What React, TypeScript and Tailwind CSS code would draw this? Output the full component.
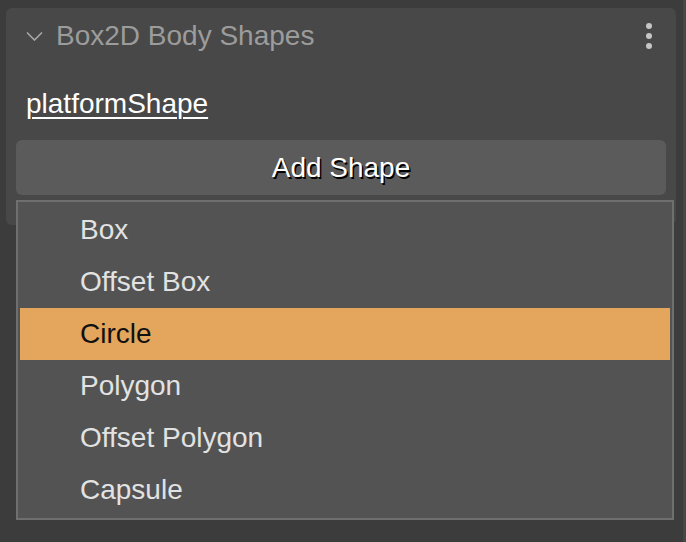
import React from 'react';

const items = ['Box', 'Offset Box', 'Circle', 'Polygon', 'Offset Polygon', 'Capsule'];

export default function App() {
  const active = 'Circle';

  return (
    <div
      className="relative flex w-[686px] h-[542px] bg-[#3c3c3c] overflow-hidden"
      style={{ fontFamily: '"Liberation Sans", Arial, sans-serif' }}
    >
      <div className="flex-1 pl-[6px] pt-[8px]">
        {/* Inspector panel */}
        <div className="w-[670px] rounded-[6px] bg-[#484848] px-[10px] pb-[30px]">
          {/* Header */}
          <div className="flex h-[54px] items-center justify-between pt-[1px]">
            <div className="flex items-center">
              <svg
                className="ml-[10px] w-[17px] h-[10px]"
                viewBox="0 0 17 10"
                fill="none"
                stroke="#a8a8a8"
                strokeWidth="1.6"
              >
                <path d="M1 1.5 L8.5 9 L16 1.5" />
              </svg>
              <span className="ml-[13px] text-[28px] leading-[32px] text-[#9c9c9c]">Box2D Body Shapes</span>
            </div>
            <div className="flex flex-col gap-[4px] pr-[14px]">
              <span className="w-[6px] h-[6px] rounded-full bg-[#c6c6c6]" />
              <span className="w-[6px] h-[6px] rounded-full bg-[#c6c6c6]" />
              <span className="w-[6px] h-[6px] rounded-full bg-[#c6c6c6]" />
            </div>
          </div>

          {/* Shape name */}
          <div className="mt-[26px] pl-[10px] text-[28px] leading-[32px] text-white underline decoration-2 underline-offset-[4px]">
            platformShape
          </div>

          {/* Add button */}
          <button className="mt-[20px] flex h-[55px] w-full items-center justify-center rounded-[6px] bg-[#5b5b5b] text-[28px] leading-[32px] text-white [text-shadow:1.5px_1.5px_0.5px_#000]">
            Add Shape
          </button>
        </div>
      </div>

      {/* Right edge strip */}
      <div className="w-[3px] bg-[#474747]" />

      {/* Dropdown menu */}
      <div className="absolute left-[16px] top-[200px] w-[658px] border-2 border-[#6f6f6f] bg-[#535353] p-[2px]">
        {items.map((item) => (
          <div
            key={item}
            className={
              item === active
                ? 'flex h-[52px] items-center pb-[1px] pl-[60px] text-[28px] leading-[32px] bg-[#e4a55c] text-[#111]'
                : 'flex h-[52px] items-center pb-[1px] pl-[60px] text-[28px] leading-[32px] text-[#e2e2e2]'
            }
          >
            {item}
          </div>
        ))}
      </div>
    </div>
  );
}
